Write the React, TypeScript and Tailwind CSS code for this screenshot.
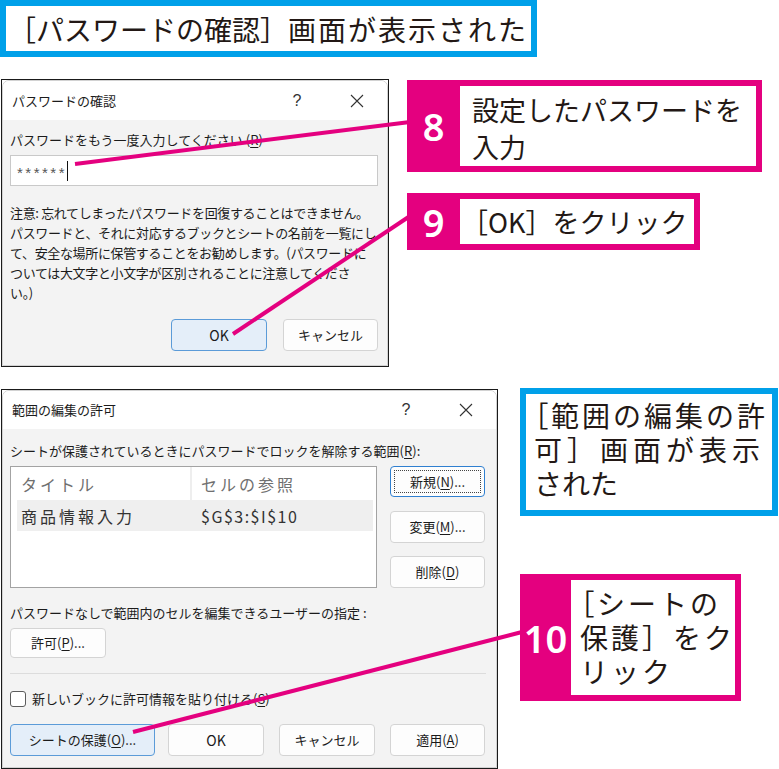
import React from 'react';

const MAGENTA = '#e4007f';

const TitleBar = ({ title, height }: { title: string; height: string }) => (
  <div className={`flex items-center bg-white ${height}`}>
    <span className="flex-1 pl-[9px] text-[13px] text-[#1b1b1b]">{title}</span>
    <span className="w-[60px] text-center font-['Liberation_Sans',sans-serif] text-[16px] font-light text-[#333]">?</span>
    <span className="w-[60px] flex justify-center">
      <svg width="14" height="14" viewBox="0 0 14 14">
        <path d="M1 1 L13 13 M13 1 L1 13" stroke="#333" strokeWidth="1.1" fill="none" />
      </svg>
    </span>
  </div>
);

const Btn = ({
  children,
  className = '',
  primary = false,
  focus = false,
}: {
  children: React.ReactNode;
  className?: string;
  primary?: boolean;
  focus?: boolean;
}) => (
  <div
    className={`flex items-center justify-center rounded-[4px] border text-[13px] text-[#1b1b1b] ${
      primary
        ? 'bg-[#e4eef9] border-[#5b9bd8]'
        : focus
        ? 'bg-[#fdfdfd] border-[#2f7fd0] border-[1.5px]'
        : 'bg-[#fdfdfd] border-[#d4d4d4]'
    } ${className}`}
  >
    {focus ? (
      <div className="flex items-center justify-center w-[calc(100%-6px)] h-[calc(100%-6px)] border border-dotted border-[#444]">
        {children}
      </div>
    ) : (
      children
    )}
  </div>
);

const U = ({ children }: { children: React.ReactNode }) => <span className="underline underline-offset-2">{children}</span>;

const Callout = ({
  num,
  className,
  numWidth,
  children,
}: {
  num: string;
  className: string;
  numWidth: string;
  children: React.ReactNode;
}) => (
  <div className={`flex bg-[#e4007f] py-[6px] pr-[6px] ${className}`}>
    <div className={`flex items-center justify-center text-white font-['Noto_Sans',sans-serif] font-semibold text-[38px] leading-none ${numWidth}`}>
      {num}
    </div>
    <div className="flex-1 bg-white text-[#231815] text-[27px]">{children}</div>
  </div>
);

export default function App() {
  return (
    <div className="relative w-[779px] h-[769px] overflow-hidden bg-white font-['Noto_Sans_CJK_JP',sans-serif]">
      {/* heading */}
      <div className="flex items-center w-[537px] h-[57px] border-[6px] border-[#00a0e9] pl-[2px] text-[28px] text-[#231815] leading-none">
        <span>［パスワードの確認］</span>
        <span className="tracking-[2px]">画面が表示された</span>
      </div>

      {/* row 1 */}
      <div className="flex mt-[22px]">
        <div className="ml-[1px] w-[388px] h-[288px] border border-[#1a1a1a] bg-white">
          <div className="flex flex-col h-full rounded-t-[7px] border border-[#d2d2d2] overflow-hidden">
            <TitleBar title="パスワードの確認" height="h-[39px]" />
            <div className="flex-1 bg-[#f3f3f3] pl-[7px] pt-[10px] text-[13px] text-[#1b1b1b]">
              <div className="leading-[20px]">
                パスワードをもう一度入力してください (<U>R</U>)
              </div>
              <div className="mt-[5px] flex items-center w-[368px] h-[31px] bg-white border border-[#c9c9c9] pl-[6px]">
                <span className="text-[15px] leading-none tracking-[2.5px] text-[#555] font-['Liberation_Sans',sans-serif] pt-[4px]">******</span>
                <span className="ml-[0px] w-[1px] h-[20px] bg-[#111]" />
              </div>
              <div className="mt-[17px] leading-[20px] tracking-[-0.35px] whitespace-nowrap">
                <div>注意: 忘れてしまったパスワードを回復することはできません。</div>
                <div>パスワードと、それに対応するブックとシートの名前を一覧にし</div>
                <div>て、安全な場所に保管することをお勧めします。(パスワードに</div>
                <div>ついては大文字と小文字が区別されることに注意してくださ</div>
                <div>い。)</div>
              </div>
              <div className="mt-[16px] flex justify-end gap-[16px] pr-[9px]">
                <Btn primary className="w-[96px] h-[32px] text-[14px]">OK</Btn>
                <Btn className="w-[95px] h-[32px]">キャンセル</Btn>
              </div>
            </div>
          </div>
        </div>

        <div className="ml-[18px] flex flex-col">
          <Callout num="8" className="mt-[1px] w-[355px] h-[92px]" numWidth="w-[53px]">
            <div className="pl-[12px] pt-[5px] leading-[37px]">
              <div>設定したパスワードを</div>
              <div>入力</div>
            </div>
          </Callout>
          <Callout num="9" className="mt-[21px] w-[293px] h-[57px]" numWidth="w-[53px]">
            <div className="flex items-center h-full pl-[1px] leading-none">［OK］をクリック</div>
          </Callout>
        </div>
      </div>

      {/* row 2 */}
      <div className="flex mt-[21px]">
        <div className="mt-[1px] ml-[1px] w-[497px] h-[380px] border border-[#1a1a1a] bg-white">
          <div className="flex flex-col h-full rounded-t-[7px] border border-[#d2d2d2] overflow-hidden">
            <TitleBar title="範囲の編集の許可" height="h-[38px]" />
            <div className="flex-1 bg-[#f3f3f3] pl-[7px] pr-[10px] pt-[12px] text-[13px] text-[#1b1b1b]">
              <div className="leading-[20px] whitespace-nowrap">
                シートが保護されているときにパスワードでロックを解除する範囲(<U>R</U>):
              </div>
              <div className="mt-[5px] flex">
                <div className="flex flex-col w-[367px] h-[122px] bg-white border border-[#a3a3a3]">
                  <div className="flex items-center h-[33px] text-[16px] text-[#6f6f6f] tracking-[3px]">
                    <div className="w-[181px] h-full flex items-center pl-[10px] border-r-2 border-[#eeeeee]">タイトル</div>
                    <div className="pl-[9px]">セルの参照</div>
                  </div>
                  <div className="flex items-center ml-[6px] mr-[3px] h-[31px] bg-[#efefef] text-[16px] text-[#333]">
                    <div className="w-[175px] pl-[4px] tracking-[3px]">商品情報入力</div>
                    <div className="pl-[9px] tracking-[1.5px]">$G$3:$I$10</div>
                  </div>
                </div>
                <div className="ml-[13px] flex flex-col">
                  <Btn focus className="w-[95px] h-[31px]">
                    新規(<U>N</U>)...
                  </Btn>
                  <Btn className="mt-[14px] w-[95px] h-[32px]">
                    変更(<U>M</U>)...
                  </Btn>
                  <Btn className="mt-[13px] w-[95px] h-[32px]">
                    削除(<U>D</U>)
                  </Btn>
                </div>
              </div>
              <div className="mt-[15px] leading-[20px] whitespace-nowrap">
                パスワードなしで範囲内のセルを編集できるユーザーの指定 :
              </div>
              <Btn className="mt-[5px] w-[96px] h-[30px]">
                許可(<U>P</U>)...
              </Btn>
              <div className="mt-[15px] h-[1px] bg-[#dcdcdc]" />
              <div className="mt-[15px] flex items-center h-[20px]">
                <span className="w-[16px] h-[16px] rounded-[3px] border border-[#5c5c5c] bg-white" />
                <span className="ml-[6px] leading-[20px]">
                  新しいブックに許可情報を貼り付ける(<U>S</U>)
                </span>
              </div>
              <div className="mt-[15px] flex">
                <Btn primary className="w-[145px] h-[32px]">
                  シートの保護(<U>O</U>)...
                </Btn>
                <Btn className="ml-[13px] w-[96px] h-[32px] text-[14px]">OK</Btn>
                <Btn className="ml-[15px] w-[96px] h-[32px]">キャンセル</Btn>
                <Btn className="ml-[15px] w-[95px] h-[32px]">
                  適用(<U>A</U>)
                </Btn>
              </div>
            </div>
          </div>
        </div>

        <div className="ml-[22px] flex flex-col">
          <div className="w-[258px] h-[128px] border-[6px] border-[#00a0e9] bg-white pl-[8px] pt-[4px] text-[28px] leading-[34px] text-[#231815] whitespace-nowrap">
            <div className="tracking-[3px]">
              <span className="[font-feature-settings:'palt']">［</span>範囲の編集の許
            </div>
            <div className="tracking-[5px]">可］画面が表示</div>
            <div>された</div>
          </div>
          <Callout num="10" className="mt-[58px] w-[221px] h-[127px]" numWidth="w-[54px]">
            <div className="pl-[9px] pt-[6px] leading-[34px] tracking-[3px] whitespace-nowrap text-[28px]">
              <div>
                <span className="[font-feature-settings:'palt']">［</span>シートの
              </div>
              <div>保護］をク</div>
              <div>リック</div>
            </div>
          </Callout>
        </div>
      </div>

      {/* leader lines */}
      <svg className="absolute inset-0 pointer-events-none" width="779" height="769">
        <line x1="75" y1="164" x2="410" y2="122" stroke={MAGENTA} strokeWidth="4" />
        <line x1="233" y1="334" x2="410" y2="216" stroke={MAGENTA} strokeWidth="4" />
        <line x1="133" y1="732" x2="522" y2="632" stroke={MAGENTA} strokeWidth="4" />
      </svg>
    </div>
  );
}
